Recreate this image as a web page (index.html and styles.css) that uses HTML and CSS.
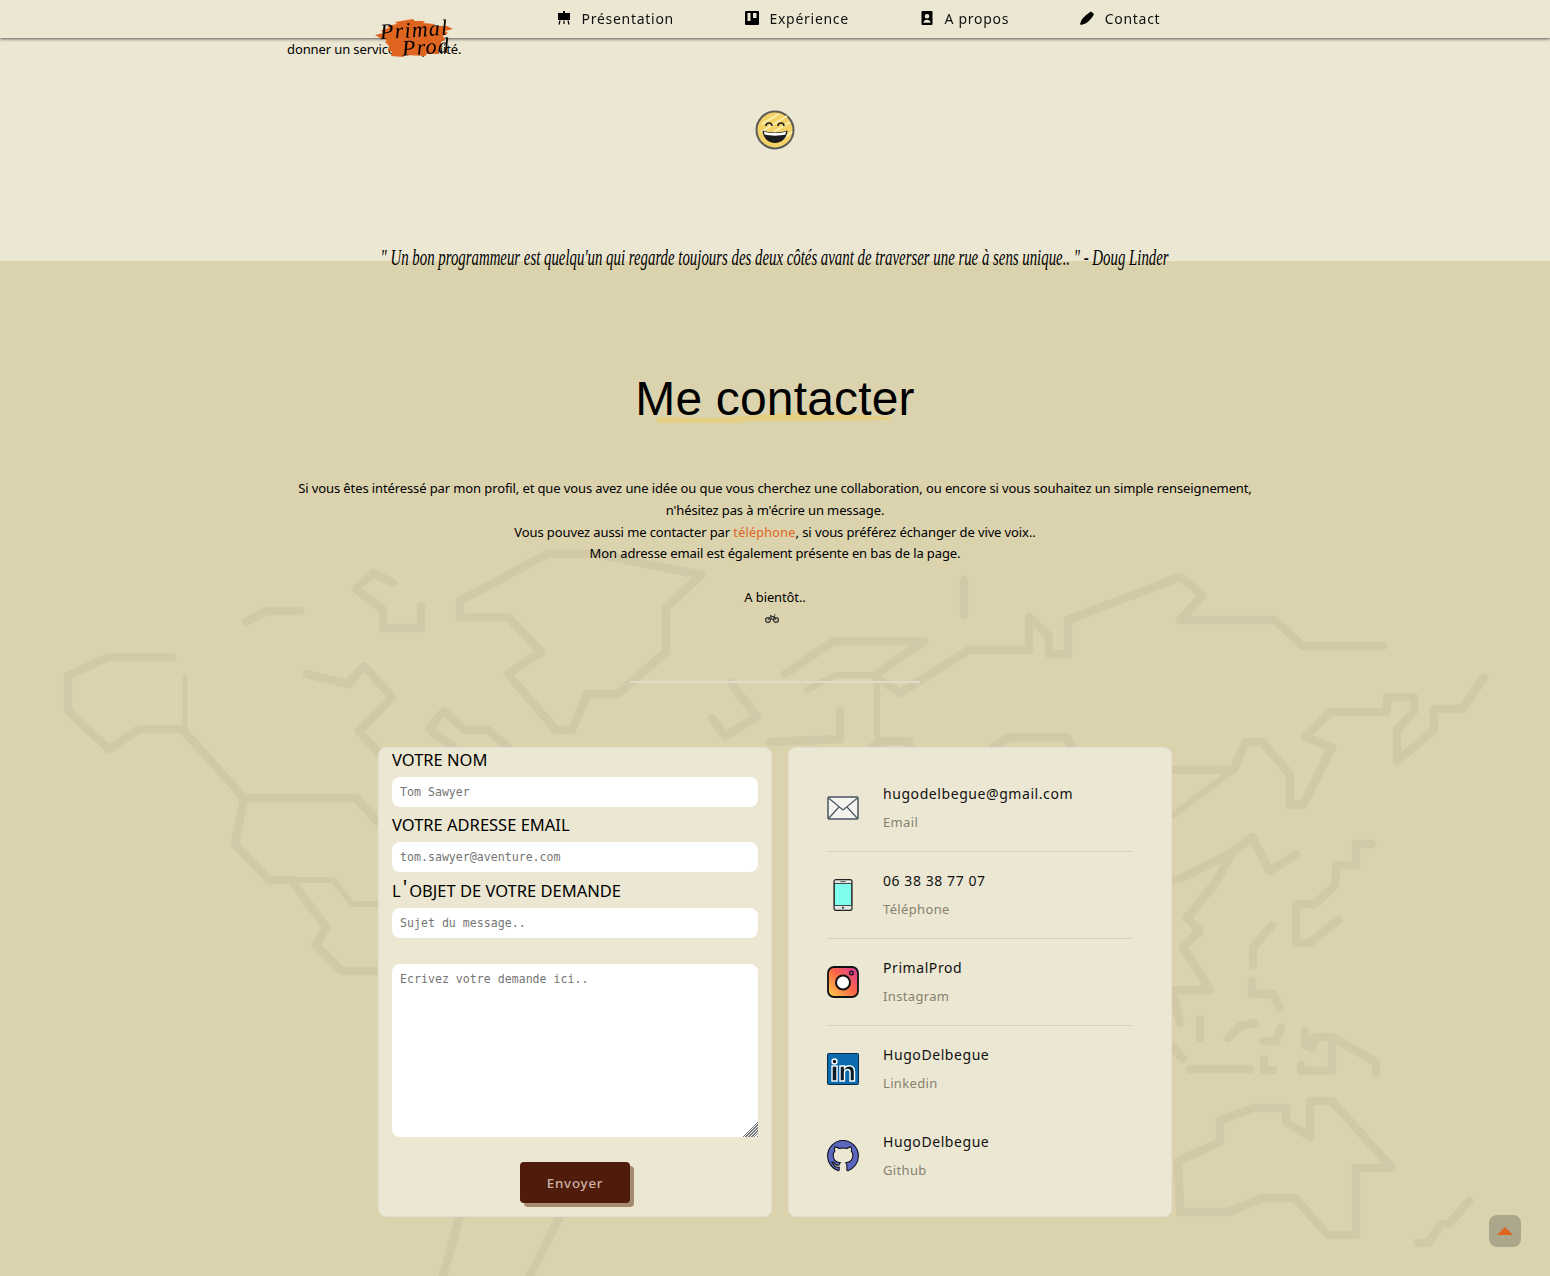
FILE: index.html
```html
<!DOCTYPE html>
<html lang="fr">

<head>
    <meta charset="UTF-8">
    <meta name="viewport" content="width=device-width, initial-scale=1.0">
    <title>Primal Prod - Contact</title>
    <link rel="stylesheet" href="styles.css">
</head>

<body>
    <header class="topbar">
        <nav class="nav">
            <a class="nav-link" href="#presentation">
                <svg class="nav-icon" viewBox="0 0 14 14"><path d="M1 2h5V0h2v2h5v7H1z" /><path d="M3 9.500 2 13.500M11 9.500l1 4M7 9.500v3.500" stroke="#000" stroke-width="1.200" fill="none" /></svg>
                Présentation
            </a>
            <a class="nav-link" href="#experience">
                <svg class="nav-icon" viewBox="0 0 14 14"><path fill-rule="evenodd" d="M1 0h12a1 1 0 0 1 1 1v12a1 1 0 0 1-1 1H1a1 1 0 0 1-1-1V1a1 1 0 0 1 1-1zM2.500 2v8h3V2zM8 2v5h3.500V2z" /></svg>
                Expérience
            </a>
            <a class="nav-link" href="#apropos">
                <svg class="nav-icon" viewBox="0 0 14 14"><path fill-rule="evenodd" d="M2.500 0h9a1 1 0 0 1 1 1v12a1 1 0 0 1-1 1h-9a1 1 0 0 1-1-1V1a1 1 0 0 1 1-1zM7 3a2.300 2.300 0 1 0 0 4.600A2.300 2.300 0 0 0 7 3zM3.500 11.800h7C10.500 9.800 9 8.800 7 8.800s-3.500 1-3.500 3z" /></svg>
                A propos
            </a>
            <a class="nav-link" href="#contact">
                <svg class="nav-icon" viewBox="0 0 14 14"><path d="M11 .5 14 3C12 7 9 10.500 5.500 12.500L1 14 0 13 1.500 9C4 5.500 7.500 2.500 11 .5z" /></svg>
                Contact
            </a>
        </nav>
    </header>

    <a class="logo" href="#top">
        <svg class="logo-brush" viewBox="0 0 80 40"><path d="M0 17 8 15 6 12 14 10 12 8 22 6 20 4 38 1 40 3 50 3 48 5 60 6 58 8 72 8 78 11 70 13 73 15 68 18 70 22 66 24 67 30 63 32 64 36 52 36 50 38 30 37 28 39 16 38 17 34 13 32 14 28 10 24 12 22 5 20z" fill="#df6420" /></svg>
        <span class="logo-word logo-primal">Primal</span>
        <span class="logo-word logo-prod">Prod</span>
    </a>

    <section class="intro">
        <p class="intro-text">donner un service de qualité.</p>
        <svg class="smiley" viewBox="0 0 40 40">
            <circle cx="20" cy="20" r="18.500" fill="#f4d265" stroke="#5c5c58" stroke-width="2" />
            <path d="M7 14 24 4M6 22 32 6M9 28 35 12M25 31 37 22" stroke="#fbeeb4" stroke-width="2" />
            <path d="M11 16a3 3 0 0 1 6 0M23 16a3 3 0 0 1 6 0" fill="none" stroke="#222" stroke-width="1.600" />
            <path d="M7.500 20.500C14 23 26 23 32.500 20.500 32 28 27 33 20 33S8 28 7.500 20.500z" fill="#1c1c1c" />
            <path d="M9 21.500C15 23.500 25 23.500 31 21.500L30.500 24.500C25 26 15 26 9.500 24.500z" fill="#fff" />
        </svg>
        <p class="quote"><span class="quote-line">" Un bon programmeur est quelqu'un qui regarde toujours des deux côtés avant de traverser une rue à sens unique.. " - Doug Linder</span></p>
    </section>

    <section class="contact" id="contact">
        <svg class="world" viewBox="0 261 1550 1015">
            <g fill="none" stroke="#d1c9a7" stroke-width="8.500" stroke-linecap="round" stroke-linejoin="round">
                <polyline points="172,657 108,657 68,676 68,711 109,749 139,729 182,729 244,798 356,798 378,822" />
                <polyline points="185,676 185,729" stroke-width="5" />
                <polyline points="244,798 235,844 269,880 291,880 326,927 316,945 342,971 378,971" />
                <polyline points="291,880 333,880 352,904 378,904" stroke-width="6" />
                <polyline points="246,622 266,611 300,611" />
                <polyline points="393,583 373,573 356,589 383,610 383,628 421,628 421,606" />
                <polygon points="460,601 547,554 597,554 701,575 666,608 666,652 618,694 587,694 572,730 556,730 508,674 541,652 508,617 460,617" />
                <polyline points="307,674 348,684 364,666 392,697 359,731 380,754" />
                <polyline points="508,747 488,730 465,730 444,711 429,729 453,747" />
                <polyline points="731,683 757,717 725,736 712,718" />
                <polyline points="460,1216 443,1276" />
                <polyline points="560,1216 530,1276" />
                <polyline points="964,580 964,615" />
                <polyline points="785,674 834,641 924,641 874,676 900,693 969,650 1029,650 1029,617 1049,636 1049,654 1068,654 1068,620 1180,577 1203,595 1180,620 1275,620 1303,646 1383,646" />
                <polyline points="807,690 835,675 874,675" stroke-width="6" />
                <polyline points="877,683 877,737" stroke-width="6" />
                <polyline points="770,742 840,739 840,711" />
                <polyline points="994,747 1009,737 1066,737 1073,749" />
                <polyline points="872,747 882,741 909,741 909,747" />
                <polyline points="1171,770 1233,770 1246,742 1262,742 1290,774 1290,805 1303,805 1332,747 1305,737 1330,712 1387,712 1387,697 1414,697 1414,711 1397,730 1397,761 1434,730 1434,709 1462,709 1484,678" />
                <polyline points="1233,770 1173,815" stroke-width="6" />
                <polyline points="1171,880 1180,879 1233,852 1252,837 1270,871 1296,854" />
                <polyline points="1233,852 1215,883 1187,918 1200,931 1183,947 1210,990 1175,990" />
                <polyline points="1173,995 1180,1023" />
                <polyline points="1171,1045 1183,1059" />
                <polyline points="1190,1069 1250,1069" />
                <polyline points="1200,1019 1200,1038" />
                <polyline points="1228,1038 1240,1026 1255,1023" />
                <polyline points="1263,1041 1276,1041 1281,1028" />
                <polyline points="1264,1059 1264,1070 1273,1070" />
                <polyline points="1305,1031 1305,1045 1312,1048 1315,1037 1332,1037 1376,1062 1376,1073" />
                <polyline points="1332,1037 1332,1071 1301,1071 1301,1065" />
                <polyline points="1272,925 1253,948 1253,965" />
                <polyline points="1252,981 1252,994 1273,994 1280,1008" />
                <polyline points="1372,844 1356,844 1356,865 1337,865 1335,885 1315,904 1296,904 1296,943 1310,943 1338,920" />
                <polygon points="1178,1161 1220,1142 1220,1120 1255,1108 1286,1108 1286,1122 1310,1137 1310,1101 1332,1101 1392,1168 1356,1168 1356,1235 1328,1235 1295,1198 1262,1198 1229,1212 1180,1212" />
                <polyline points="1469,1201 1449,1224 1441,1224 1428,1243 1418,1243" />
            </g>
        </svg>

        <div class="contact-inner">
            <h2 class="title">
                <svg class="title-mark" viewBox="0 0 236 10"><path d="M2 4 60 5 125 0 190 1 236 4V7L160 8 95 8 85 10 2 10z" fill="#e5cf85" /></svg>
                <span class="title-text">Me contacter</span>
            </h2>

            <p class="message">
                Si vous êtes intéressé par mon profil, et que vous avez une idée ou que vous cherchez une collaboration, ou encore si vous souhaitez un simple renseignement,<br>
                n'hésitez pas à m'écrire un message.<br>
                Vous pouvez aussi me contacter par <a class="phone-link" href="#tel">téléphone</a>, si vous préférez échanger de vive voix..<br>
                Mon adresse email est également présente en bas de la page.<br>
                <br>
                A bientôt..
            </p>
            <svg class="bike" viewBox="0 0 14 9">
                <circle cx="3" cy="6" r="2.400" fill="none" stroke="#333" stroke-width="1.300" />
                <circle cx="11" cy="6" r="2.400" fill="none" stroke="#333" stroke-width="1.300" />
                <path d="M3 6 5.500 2.500H9.500L11 6M5.500 2.500 7 6 9.500 2.500M5 1.500H6.500M9 1H10.500" fill="none" stroke="#333" stroke-width="1" />
            </svg>

            <hr class="separator">

            <div class="cards">
                <form class="card form-card">
                    <label class="field-label" for="nom">VOTRE NOM</label>
                    <input class="field" id="nom" type="text" placeholder="Tom Sawyer">
                    <label class="field-label" for="email">VOTRE ADRESSE EMAIL</label>
                    <input class="field" id="email" type="text" placeholder="tom.sawyer@aventure.com">
                    <label class="field-label field-label-tall" for="sujet">L<span class="apostrophe">'</span>OBJET DE VOTRE DEMANDE</label>
                    <input class="field" id="sujet" type="text" placeholder="Sujet du message..">
                    <textarea class="field field-area" placeholder="Ecrivez votre demande ici.."></textarea>
                    <button class="send" type="button">Envoyer</button>
                </form>

                <div class="card info-card">
                    <div class="info-row">
                        <svg class="info-icon" viewBox="0 0 32 32">
                            <rect x="1" y="5" width="30" height="22" rx="1" fill="#f4f3ee" stroke="#4a5560" stroke-width="1.500" />
                            <path d="M1.500 6 16 18 30.500 6M1.500 26.500 12 15M30.500 26.500 20 15" fill="none" stroke="#4a5560" stroke-width="1.200" />
                        </svg>
                        <div>
                            <div class="info-name">hugodelbegue@gmail.com</div>
                            <div class="info-kind">Email</div>
                        </div>
                    </div>
                    <div class="info-row">
                        <svg class="info-icon" viewBox="0 0 32 32">
                            <rect x="7" y="0.700" width="18" height="30.600" rx="2" fill="#e4e4e0" stroke="#222" stroke-width="1.200" />
                            <rect x="7.600" y="4.500" width="16.800" height="22" fill="#7ffcec" stroke="#222" stroke-width="0.800" />
                            <circle cx="16" cy="28.800" r="1" fill="#222" />
                            <path d="M13.500 2.600h5" stroke="#555" stroke-width="1" />
                        </svg>
                        <div>
                            <div class="info-name">06 38 38 77 07</div>
                            <div class="info-kind">Téléphone</div>
                        </div>
                    </div>
                    <div class="info-row">
                        <svg class="info-icon" viewBox="0 0 32 32">
                            <defs>
                                <linearGradient id="insta" x1="0" y1="1" x2="1" y2="0">
                                    <stop offset="0" stop-color="#ffd54f" />
                                    <stop offset="0.500" stop-color="#fb6a45" />
                                    <stop offset="1" stop-color="#d8359c" />
                                </linearGradient>
                            </defs>
                            <rect x="1" y="1" width="30" height="30" rx="6" fill="url(#insta)" stroke="#111" stroke-width="1.800" />
                            <circle cx="16" cy="16.500" r="7" fill="#fff" stroke="#111" stroke-width="2" />
                            <circle cx="24.500" cy="7" r="1.900" fill="#d8359c" stroke="#111" stroke-width="1.200" />
                        </svg>
                        <div>
                            <div class="info-name">PrimalProd</div>
                            <div class="info-kind">Instagram</div>
                        </div>
                    </div>
                    <div class="info-row">
                        <svg class="info-icon" viewBox="0 0 32 32">
                            <rect x="0.500" y="0.500" width="31" height="31" rx="1" fill="#0a6cae" stroke="#0c2a44" stroke-width="1" />
                            <circle cx="7.500" cy="8.500" r="2.500" fill="#0a1c2c" stroke="#fff" stroke-width="1.400" />
                            <rect x="5" y="13" width="5" height="15" fill="#0a1c2c" stroke="#fff" stroke-width="1.400" />
                            <path d="M13 13h4.500v2c1-1.500 2.800-2.300 4.500-2.300 3.800 0 5.500 2.300 5.500 6V28H23v-8.500c0-1.800-.8-3-2.500-3s-3 1.200-3 3V28H13z" fill="#0a1c2c" stroke="#fff" stroke-width="1.400" />
                        </svg>
                        <div>
                            <div class="info-name">HugoDelbegue</div>
                            <div class="info-kind">Linkedin</div>
                        </div>
                    </div>
                    <div class="info-row">
                        <svg class="info-icon" viewBox="-0.300 -0.300 16.600 16.600">
                            <path fill-rule="evenodd" fill="#5b66bd" stroke="#0d0d1a" stroke-width="0.550" d="M8 0C3.580 0 0 3.580 0 8c0 3.540 2.290 6.530 5.470 7.590.4.070.55-.17.55-.38 0-.19-.01-.82-.01-1.490-2.010.37-2.530-.49-2.690-.94-.09-.23-.48-.94-.82-1.130-.28-.15-.68-.52-.01-.53.630-.01 1.080.58 1.230.82.720 1.210 1.870.87 2.330.66.070-.52.28-.87.51-1.070-1.780-.2-3.640-.89-3.640-3.950 0-.87.31-1.590.82-2.150-.08-.2-.36-1.020.08-2.120 0 0 .67-.21 2.200.82.64-.18 1.320-.27 2-.27.68 0 1.360.09 2 .27 1.530-1.040 2.200-.82 2.200-.82.44 1.100.16 1.920.08 2.120.51.56.82 1.270.82 2.150 0 3.070-1.870 3.750-3.650 3.950.29.25.54.73.54 1.480 0 1.070-.01 1.930-.01 2.200 0 .21.15.46.55.38A8.013 8.013 0 0 0 16 8c0-4.420-3.580-8-8-8z" />
                        </svg>
                        <div>
                            <div class="info-name">HugoDelbegue</div>
                            <div class="info-kind">Github</div>
                        </div>
                    </div>
                </div>
            </div>
        </div>
    </section>

    <a class="to-top" href="#top"><span class="to-top-arrow"></span></a>
</body>

</html>
```

FILE: styles.css
```css
* {
    box-sizing: border-box;
}

body {
    margin: 0;
    font-family: "Noto Sans", Arial, sans-serif;
    font-size: 13px;
    letter-spacing: -0.110px;
    color: #000;
    background-color: #dbd3ae;
}

a {
    color: inherit;
    text-decoration: none;
}

.topbar {
    position: fixed;
    top: 0;
    left: 0;
    width: 100%;
    height: 38px;
    background-color: #ece7d2;
    box-shadow: 0 1px 3px #555;
    z-index: 5;
}

.nav {
    display: flex;
    align-items: center;
    gap: 71px;
    height: 100%;
    padding-left: 557px;
    padding-bottom: 2px;
}

.nav-link {
    display: flex;
    align-items: center;
    gap: 10.500px;
    font-size: 14px;
    letter-spacing: 0.720px;
    color: #111;
}

.nav-icon {
    width: 14px;
    height: 14px;
}

.logo {
    position: fixed;
    top: 18px;
    left: 375px;
    width: 80px;
    height: 40px;
    z-index: 6;
    color: #000;
}

.logo-brush {
    display: block;
    width: 80px;
    height: 40px;
}

.logo-word {
    position: absolute;
    font-family: "Liberation Serif", serif;
    font-style: italic;
    font-size: 22px;
    letter-spacing: 1.200px;
    line-height: 22px;
    transform: rotate(-4deg);
}

.logo-primal {
    top: 1px;
    left: 5px;
}

.logo-prod {
    top: 18px;
    left: 27px;
}

.intro {
    position: relative;
    z-index: 1;
    height: 261px;
    padding-top: 38px;
    background-color: #ece7d2;
    text-align: center;
}

.intro-text {
    margin: 0;
    padding-left: 287px;
    text-align: left;
    line-height: 22px;
}

.smiley {
    display: block;
    width: 40px;
    height: 40px;
    margin: 50px auto 0;
}

.quote {
    margin: 92px 0 0;
    line-height: 30px;
    font-family: "Liberation Serif", serif;
    font-style: italic;
    font-size: 24px;
    letter-spacing: 0;
    white-space: nowrap;
}

.quote-line {
    display: inline-block;
    transform: scaleX(0.618);
}

.contact {
    position: relative;
    height: 1015px;
    overflow: hidden;
    background-color: #dbd3ae;
}

.world {
    position: absolute;
    top: 0;
    left: 0;
    width: 1550px;
    height: 1015px;
}

.contact-inner {
    position: relative;
    padding-top: 110px;
    text-align: center;
}

.title {
    position: relative;
    width: 300px;
    height: 56px;
    margin: 0 auto;
    font-family: "Liberation Sans", Arial, sans-serif;
    font-size: 48px;
    font-weight: normal;
    letter-spacing: 0.150px;
    line-height: 56px;
}

.title-mark {
    position: absolute;
    left: 30px;
    top: 42px;
    width: 236px;
    height: 10px;
}

.title-text {
    position: relative;
}

.message {
    margin: 51px 0 0;
    line-height: 21.750px;
}

.phone-link {
    color: #df6420;
    font-size: 12.500px;
    letter-spacing: 0.300px;
}

.bike {
    display: block;
    width: 14px;
    height: 9px;
    margin: 5px auto 0 765px;
}

.separator {
    width: 290px;
    height: 2px;
    margin: 58px auto 0;
    border: 0;
    background-color: #e0dccb;
}

.cards {
    display: flex;
    justify-content: center;
    align-items: stretch;
    gap: 16px;
    margin-top: 64px;
    text-align: left;
}

.card {
    height: 470px;
    background-color: #ece7d2;
    border: 1px solid #e2dfd2;
    border-radius: 8px;
}

.form-card {
    display: flex;
    flex-direction: column;
    width: 394px;
    padding: 1px 13px 0;
}

.field-label {
    margin-bottom: 6px;
    font-size: 16.500px;
    letter-spacing: 0;
    line-height: 22px;
}

.field-label:not(:first-child) {
    margin-top: 7px;
}

.field-label.field-label-tall {
    margin-top: 8px;
}

.apostrophe {
    padding: 0 2px;
    font-size: 20px;
    line-height: 0;
    vertical-align: 3px;
}

.field {
    flex: none;
    width: 366px;
    height: 30px;
    padding: 0 8px;
    border: 0;
    border-radius: 8px;
    background-color: #fff;
    font-family: "DejaVu Sans Mono", monospace;
    font-size: 11.600px;
}

.field-area {
    height: 173px;
    margin-top: 26px;
    padding: 8px;
    display: block;
}

.field-area::-webkit-resizer {
    background:
        linear-gradient(135deg, #fff 50%, transparent 50%),
        repeating-linear-gradient(135deg, #777 0 1px, #fff 1px 2px);
}

.send {
    align-self: center;
    width: 110px;
    height: 41px;
    margin-top: 25px;
    padding-top: 2px;
    border: 0;
    border-radius: 4px;
    background-color: #4f1b0b;
    box-shadow: 4px 4px 0 #a68a72;
    color: #cdb3a5;
    font-family: "Noto Sans", Arial, sans-serif;
    font-size: 13.300px;
    font-weight: 500;
    letter-spacing: 0.800px;
}

.info-card {
    width: 384px;
    padding: 17px 39px 0 38px;
}

.info-row {
    display: flex;
    align-items: center;
    gap: 24px;
    height: 87px;
    border-bottom: 1px solid #d4cfba;
}

.info-row:nth-child(n+4) {
    border-bottom: 0;
}

.info-icon {
    flex: none;
    width: 32px;
    height: 32px;
}

.info-name {
    font-size: 14px;
    letter-spacing: 0.570px;
    line-height: 20px;
    color: #111;
}

.info-kind {
    margin-top: 8px;
    font-size: 13px;
    letter-spacing: 0.350px;
    line-height: 20px;
    color: #85816f;
}

.to-top {
    position: fixed;
    left: 1489px;
    top: 1215px;
    display: flex;
    align-items: center;
    justify-content: center;
    width: 32px;
    height: 32px;
    border-radius: 8px;
    background-color: #aca78b;
    z-index: 5;
}

.to-top-arrow {
    width: 0;
    height: 0;
    border-left: 8px solid transparent;
    border-right: 8px solid transparent;
    border-bottom: 8px solid #df6420;
}
```
